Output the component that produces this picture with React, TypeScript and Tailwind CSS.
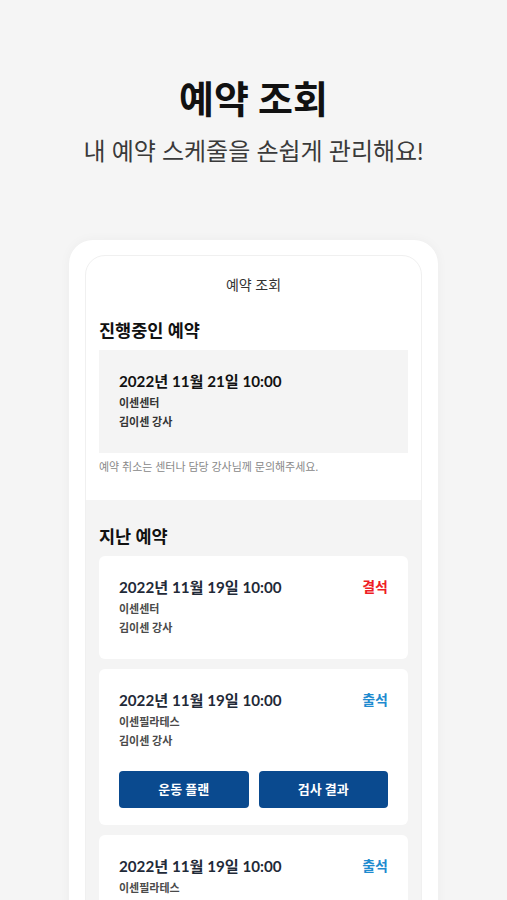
const font = { fontFamily: '"Lato", "Noto Sans CJK KR", sans-serif' };

type Past = {
  date: string;
  center: string;
  teacher: string;
  status: "결석" | "출석";
  actions?: boolean;
};

const past: Past[] = [
  { date: "2022년 11월 19일 10:00", center: "이센센터", teacher: "김이센 강사", status: "결석" },
  { date: "2022년 11월 19일 10:00", center: "이센필라테스", teacher: "김이센 강사", status: "출석", actions: true },
  { date: "2022년 11월 19일 10:00", center: "이센필라테스", teacher: "김이센 강사", status: "출석" },
];

const PastCard = ({ item }: { item: Past }) => {
  return (
    <div className="bg-white rounded-[6px] px-[20px] pt-[21px] pb-[22px]">
      <div className="flex items-center justify-between">
        <span className="text-[15.2px] leading-[20px] font-bold text-[#1f2a38]">{item.date}</span>
        <span
          className={`text-[14px] leading-[20px] font-bold ${
            item.status === "결석" ? "text-[#ee1d25]" : "text-[#1f8bcf]"
          }`}
        >
          {item.status}
        </span>
      </div>
      <div className="mt-[2px] text-[11px] leading-[19px] font-semibold text-[#4a4a4a]">{item.center}</div>
      <div className="text-[11px] leading-[19px] font-semibold text-[#4a4a4a]">{item.teacher}</div>
      {item.actions && (
        <div className="mt-[21px] -mb-[5px] grid grid-cols-2 gap-[10px]">
          <button className="h-[37px] rounded-[4px] bg-[#0a4a8f] text-white text-[13px] font-bold">운동 플랜</button>
          <button className="h-[37px] rounded-[4px] bg-[#0a4a8f] text-white text-[13px] font-bold">검사 결과</button>
        </div>
      )}
    </div>
  );
};

export default function App() {
  return (
    <div className="h-[900px] overflow-hidden bg-[#f5f5f5]" style={font}>
      <div className="pt-[77px] text-center">
        <h1 className="text-[38px] leading-[42px] font-bold text-[#111]">예약 조회</h1>
        <p className="mt-[17px] text-[24px] leading-[30px] font-normal text-[#3a3a3a]">내 예약 스케줄을 손쉽게 관리해요!</p>
      </div>

      <div className="mt-[74px] mx-auto w-[369px] bg-white rounded-t-[24px] pt-[15px] px-[16px] shadow-[0_0_12px_rgba(0,0,0,0.04)] h-[700px]">
        <div className="border border-[#f0f0f0] rounded-t-[20px] bg-white h-full overflow-hidden">
          <div className="px-[13px] pb-[26px]">
            <div className="pt-[20px] text-center text-[14px] leading-[18px] text-[#333]">예약 조회</div>
            <h2 className="mt-[26px] text-[17.5px] leading-[22px] font-bold text-[#111]">진행중인 예약</h2>
            <div className="mt-[8px] bg-[#f4f4f4] px-[20px] pt-[21px] pb-[22px]">
              <div className="text-[15.2px] leading-[20px] font-bold text-[#111]">2022년 11월 21일 10:00</div>
              <div className="mt-[2px] text-[11px] leading-[19px] font-semibold text-[#333]">이센센터</div>
              <div className="text-[11px] leading-[19px] font-semibold text-[#333]">김이센 강사</div>
            </div>
            <p className="mt-[7px] text-[11px] leading-[14px] text-[#888]">예약 취소는 센터나 담당 강사님께 문의해주세요.</p>
          </div>

          <div className="bg-[#f4f4f4] px-[13px] pt-[26px] pb-[20px]">
            <h2 className="text-[17.5px] leading-[22px] font-bold text-[#111]">지난 예약</h2>
            <div className="mt-[8px] flex flex-col gap-[10px]">
              {past.map((item, i) => (
                <PastCard key={i} item={item} />
              ))}
            </div>
          </div>
        </div>
      </div>
    </div>
  );
}
